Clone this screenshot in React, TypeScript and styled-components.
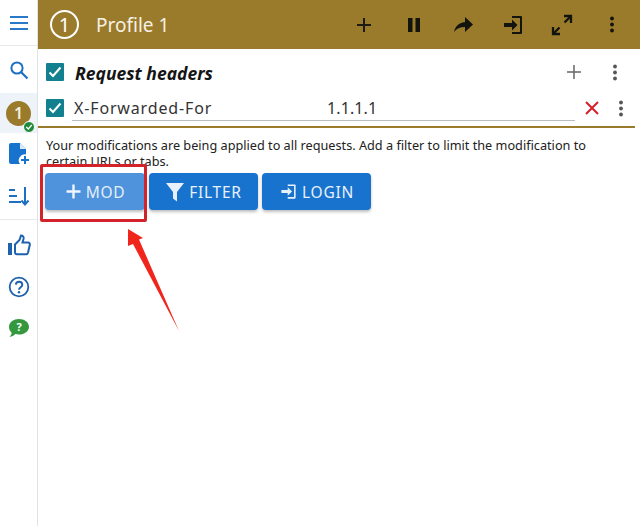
import React from "react"
import styled, { createGlobalStyle } from "styled-components"

const Global = createGlobalStyle`
  html, body { margin: 0; padding: 0; background: #fff; }
  body { font-family: "Noto Sans", "Open Sans", sans-serif; }
  * { box-sizing: border-box; }
`

const Page = styled.div`
  position: relative;
  display: flex;
  width: 640px;
  height: 526px;
  overflow: hidden;
  background: #fff;
`

const Sidebar = styled.div`
  width: 38px;
  flex: none;
  display: flex;
  flex-direction: column;
  align-items: stretch;
  border-right: 1px solid #dfe3e8;
  background: #fff;
`

const SideItem = styled.div<{ $h: number; $active?: boolean; $line?: boolean; $top?: number }>`
  height: ${p => p.$h}px;
  padding-top: ${p => p.$top || 0}px;
  display: flex;
  align-items: center;
  justify-content: center;
  background: ${p => (p.$active ? "#eef3fa" : "transparent")};
  border-bottom: ${p => (p.$line ? "1px solid #e6e8ec" : "none")};
`

const Bubble = styled.div`
  position: relative;
  width: 25px;
  height: 25px;
  border-radius: 50%;
  background: #9a7b2c;
  color: #f4efe2;
  font-size: 16px;
  font-weight: 600;
  display: flex;
  align-items: center;
  justify-content: center;
`

const Badge = styled.div`
  position: absolute;
  right: -4px;
  bottom: -7px;
  width: 12px;
  height: 12px;
  border-radius: 50%;
  background: #1f8a3c;
  border: 1px solid #fff;
`

const Main = styled.div`
  flex: 1;
  display: flex;
  flex-direction: column;
  min-width: 0;
`

const Header = styled.div`
  height: 49px;
  flex: none;
  background: #9a7b2c;
  display: flex;
  align-items: center;
  padding: 0 16px 0 12px;
`

const ProfileNum = styled.div`
  width: 29px;
  height: 29px;
  border-radius: 50%;
  border: 2.5px solid #fff;
  color: #fff;
  font-size: 20px;
  display: flex;
  align-items: center;
  justify-content: center;
`

const ProfileName = styled.div`
  color: #f6f1e4;
  font-size: 19px;
  margin-left: 17px;
  flex: 1;
`

const HeaderIcons = styled.div`
  display: flex;
  align-items: center;
  gap: 25.6px;
`

const IconSlot = styled.div`
  width: 24px;
  height: 24px;
  display: flex;
  align-items: center;
  justify-content: center;
`

const Section = styled.div`
  display: flex;
  align-items: center;
  height: 46px;
  padding: 0 22px 0 8px;
`

const Check = styled.div`
  width: 18px;
  height: 18px;
  flex: none;
  background: #13808f;
  border-radius: 1px;
  display: flex;
  align-items: center;
  justify-content: center;
`

const SectionTitle = styled.div`
  font-size: 17.5px;
  font-weight: 700;
  font-style: italic;
  color: #151515;
  margin-left: 11px;
  padding-top: 2px;
  flex: 1;
`

const ModRow = styled.div`
  height: 33px;
  padding: 0 11px 0 8px;
  margin-right: 5px;
  border-bottom: 2px solid #9a7b2c;
`

const ModFields = styled.div`
  display: flex;
  align-items: center;
  height: 26px;
`

const Inputs = styled.div`
  flex: 1;
  display: flex;
  align-items: center;
  height: 26px;
  margin-left: 8px;
  padding-left: 2px;
  border-bottom: 1px solid #b9bcc0;
  font-size: 16px;
  color: #333;
`

const NameText = styled.div`
  width: 253px;
  letter-spacing: 0.85px;
`

const ValueText = styled.div`
  letter-spacing: 0.1px;
`

const RowIcons = styled.div`
  display: flex;
  align-items: center;
  gap: 17px;
  margin-left: 8px;
`

const Notice = styled.p`
  margin: 9px 0 0;
  padding: 0 30px 0 8px;
  height: 36px;
  font-size: 12.7px;
  line-height: 16px;
  color: #222;
`

const Buttons = styled.div`
  display: flex;
  gap: 4px;
  padding-left: 7px;
`

const Button = styled.div<{ $w: number; $light?: boolean }>`
  width: ${p => p.$w}px;
  height: 37px;
  border-radius: 4px;
  background: ${p => (p.$light ? "#4e93dc" : "#1873cf")};
  color: ${p => (p.$light ? "#e4effa" : "#e8f1fb")};
  box-shadow: 0 2px 3px rgba(0, 0, 0, 0.25);
  display: flex;
  align-items: center;
  justify-content: center;
  gap: 4px;
  font-size: 15.5px;
  letter-spacing: 0.75px;
`

const RedBox = styled.div`
  position: absolute;
  left: 40px;
  top: 164px;
  width: 107px;
  height: 58px;
  border: 3px solid #d3232a;
  border-radius: 2px;
`

const RedCover = styled.div`
  position: absolute;
  left: 43px;
  top: 167px;
  width: 101px;
  height: 6px;
  background: #fff;
`

const Arrow = styled.svg`
  position: absolute;
  left: 120px;
  top: 225px;
`

const Dots = ({ c = "#555" }: { c?: string }) => (
  <svg width="6" height="17" viewBox="0 0 6 17">
    <circle cx="3" cy="2.500" r="1.900" fill={c} />
    <circle cx="3" cy="8.500" r="1.900" fill={c} />
    <circle cx="3" cy="14.500" r="1.900" fill={c} />
  </svg>
)

const Tick = () => (
  <svg width="14" height="12" viewBox="0 0 14 12">
    <path d="M1.500 6.500 5 10l7.500-8.500" fill="none" stroke="#fff" strokeWidth="2" />
  </svg>
)

const LoginIcon = ({ c, s }: { c: string; s: number }) => (
  <svg width={s} height={s} viewBox="0 0 24 24">
    <path d="M11 3h9a1 1 0 0 1 1 1v16a1 1 0 0 1-1 1h-9v-2h8V5h-8z" fill={c} />
    <path d="M11 6.500 16.500 12 11 17.500V14H3v-4h8z" fill={c} />
  </svg>
)

export default function App() {
  return (
    <Page>
      <Global />
      <Sidebar>
        <SideItem $h={46} $line>
          <svg width="20" height="16" viewBox="0 0 20 16">
            <path d="M1 2h18M1 8h18M1 14h18" stroke="#2a78c8" strokeWidth="1.800" />
          </svg>
        </SideItem>
        <SideItem $h={47}>
          <svg width="20" height="20" viewBox="0 0 20 20">
            <circle cx="8" cy="8" r="5.600" fill="none" stroke="#1e6fc0" strokeWidth="2" />
            <path d="M12 12l6.500 6.500" stroke="#1e6fc0" strokeWidth="2.200" />
          </svg>
        </SideItem>
        <SideItem $h={40} $active>
          <Bubble>
            1
            <Badge>
              <svg width="10" height="10" viewBox="0 0 10 10" style={{ display: "block" }}>
                <path d="M2.300 5 4.300 7 7.700 3" fill="none" stroke="#fff" strokeWidth="1.300" />
              </svg>
            </Badge>
          </Bubble>
        </SideItem>
        <SideItem $h={42}>
          <svg width="22" height="24" viewBox="0 0 22 24">
            <path d="M3 1h9l6 6v5.500a6 6 0 0 0-6 9.500H3a2 2 0 0 1-2-2V3a2 2 0 0 1 2-2z" fill="#1873cf" />
            <path d="M12 1v6h6z" fill="#fff" opacity=".85" />
            <path d="M17 14v8M13 18h8" stroke="#1873cf" strokeWidth="2" />
          </svg>
        </SideItem>
        <SideItem $h={42}>
          <svg width="22" height="22" viewBox="0 0 22 22">
            <path d="M1 5h6M1 11h8M1 17h12" stroke="#1e6fc0" strokeWidth="2" />
            <path d="M17 2v17M13.500 15.500 17 19.500l3.500-4" fill="none" stroke="#1e6fc0" strokeWidth="2" />
          </svg>
        </SideItem>
        <SideItem $h={3} $line />
        <SideItem $h={46} $top={4}>
          <svg width="24" height="22" viewBox="0 0 24 22">
            <rect x="1" y="9" width="4" height="12" fill="#1e62ad" />
            <path d="M8 10.500 12.500 6 14 1.500c2 0 3 1.500 2.500 3.500L15.500 8.500H21a1.800 1.800 0 0 1 1.800 2.200l-1.800 8a2 2 0 0 1-2 1.500H10a2 2 0 0 1-2-2z" fill="none" stroke="#1e62ad" strokeWidth="2" />
          </svg>
        </SideItem>
        <SideItem $h={42}>
          <svg width="22" height="22" viewBox="0 0 22 22">
            <circle cx="11" cy="11" r="9.300" fill="none" stroke="#1e62ad" strokeWidth="1.800" />
            <path d="M7.800 8.600A3.200 3.200 0 0 1 11 5.800c1.900 0 3.300 1.300 3.300 3 0 2.500-3.300 2.500-3.300 5" fill="none" stroke="#1e62ad" strokeWidth="1.900" />
            <circle cx="11" cy="16.200" r="1.200" fill="#1e62ad" />
          </svg>
        </SideItem>
        <SideItem $h={40}>
          <svg width="22" height="20" viewBox="0 0 22 20">
            <path d="M11 1c5.500 0 10 3.300 10 7.800s-4.500 7.800-10 7.800c-1.300 0-2.500-.2-3.600-.5C6 17.600 4 18.800 1.500 19c1.300-1.200 2-2.600 2.200-4.200C2 13.400 1 11.200 1 8.800 1 4.300 5.500 1 11 1z" fill="#34983f" />
            <text x="11" y="13" textAnchor="middle" fontSize="11" fontWeight="700" fill="#fff" fontFamily="Noto Sans">?</text>
          </svg>
        </SideItem>
      </Sidebar>
      <Main>
        <Header>
          <ProfileNum>1</ProfileNum>
          <ProfileName>Profile 1</ProfileName>
          <HeaderIcons>
            <IconSlot>
              <svg width="24" height="24" viewBox="0 0 24 24">
                <path d="M12 5v14M5 12h14" stroke="#1c1c14" strokeWidth="2" />
              </svg>
            </IconSlot>
            <IconSlot>
              <svg width="24" height="24" viewBox="0 0 24 24">
                <path d="M6 5h4.500v14H6zM13.500 5H18v14h-4.500z" fill="#14140e" />
              </svg>
            </IconSlot>
            <IconSlot>
              <svg width="24" height="24" viewBox="0 0 24 24">
                <path d="M14 9V4l8 7.500L14 19v-5c-5 0-8.500 1.500-11 5 1-5 4-9 11-10z" fill="#14140e" />
              </svg>
            </IconSlot>
            <IconSlot>
              <LoginIcon c="#14140e" s={26} />
            </IconSlot>
            <IconSlot>
              <svg width="24" height="24" viewBox="0 0 24 24">
                <path d="M14 3h7v7M21 3l-6.500 6.500M10 21H3v-7M3 21l6.500-6.500" fill="none" stroke="#14140e" strokeWidth="2.300" />
              </svg>
            </IconSlot>
            <IconSlot>
              <Dots c="#14140e" />
            </IconSlot>
          </HeaderIcons>
        </Header>
        <Section>
          <Check><Tick /></Check>
          <SectionTitle>Request headers</SectionTitle>
          <svg width="18" height="18" viewBox="0 0 18 18" style={{ marginRight: 29 }}>
            <path d="M9 2v14M2 9h14" stroke="#666" strokeWidth="1.500" />
          </svg>
          <Dots />
        </Section>
        <ModRow>
          <ModFields>
            <Check><Tick /></Check>
            <Inputs>
              <NameText>X-Forwarded-For</NameText>
              <ValueText>1.1.1.1</ValueText>
            </Inputs>
            <RowIcons>
              <svg width="18" height="18" viewBox="0 0 18 18">
                <path d="M3 3l12 12M15 3 3 15" stroke="#d5202c" strokeWidth="2" />
              </svg>
              <Dots />
            </RowIcons>
          </ModFields>
        </ModRow>
        <Notice>
          Your modifications are being applied to all requests. Add a filter to limit the modification to certain URLs or tabs.
        </Notice>
        <Buttons>
          <Button $w={100} $light>
            <svg width="17" height="17" viewBox="0 0 17 17">
              <path d="M8.500 1.500v14M1.500 8.500h14" stroke="#eef5fc" strokeWidth="2.400" />
            </svg>
            MOD
          </Button>
          <Button $w={109}>
            <svg width="20" height="20" viewBox="0 0 20 20">
              <path d="M1 1h18l-7 9v9.500l-4-3V10z" fill="#e8f1fb" />
            </svg>
            FILTER
          </Button>
          <Button $w={109}>
            <LoginIcon c="#e8f1fb" s={19} />
            LOGIN
          </Button>
        </Buttons>
      </Main>
      <RedCover />
      <RedBox />
      <Arrow width="62" height="110" viewBox="0 0 62 110">
        <path d="M8 4 23 13l-4 1.500 40 91.500L13 19l-5 2z" fill="#f0261c" />
      </Arrow>
    </Page>
  )
}
